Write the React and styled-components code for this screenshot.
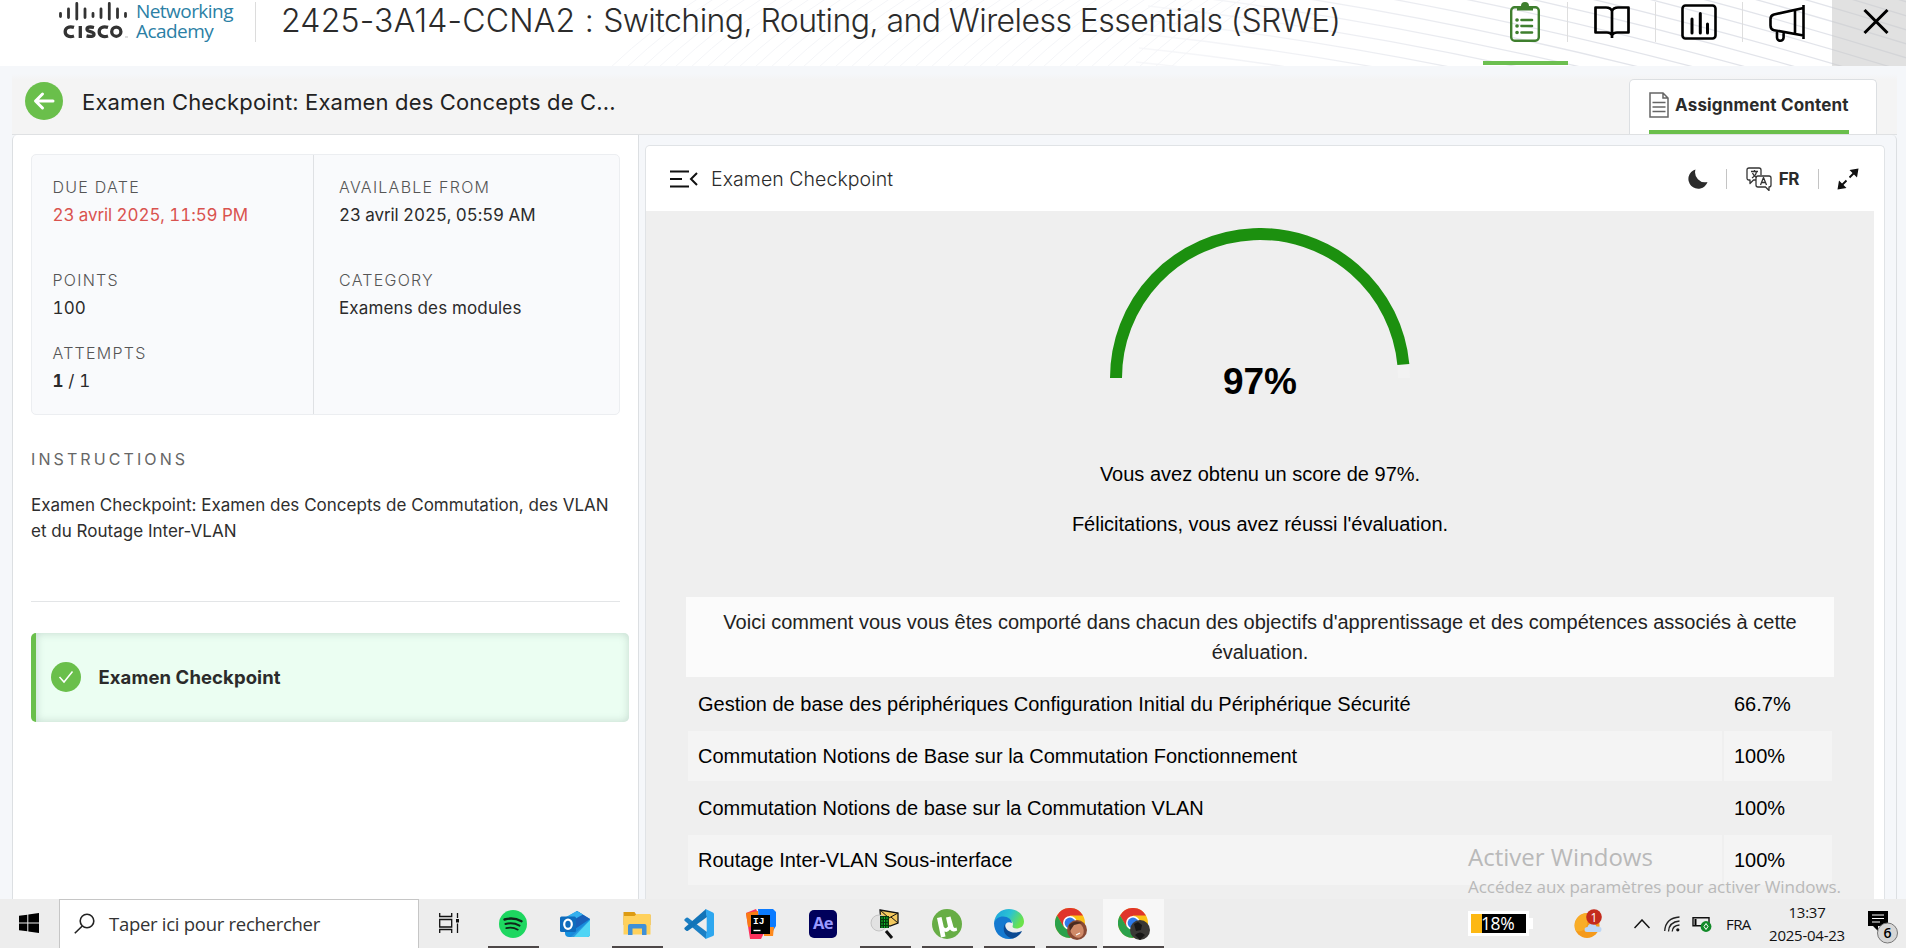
import React from "react";
import styled, { createGlobalStyle, css } from "styled-components";

const GlobalStyle = createGlobalStyle`
  * { box-sizing: border-box; }
  html, body { margin: 0; padding: 0; overflow: hidden; }
  body { font-family: Inter, "Liberation Sans", sans-serif; color: #2b2b2b; background: #f5f7fa; }
  p, h1, h2 { margin: 0; font-weight: 400; }
  svg { display: block; flex: none; }
`;

const Screen = styled.div`
  position: relative;
  width: 1906px;
  height: 948px;
  display: grid;
  grid-template-rows: 66px minmax(0, 1fr) 49px;
  overflow: hidden;
`;

/* ---------- course header ---------- */
const Header = styled.header`
  position: relative;
  display: flex;
  align-items: flex-start;
  background: #fff;
  overflow: hidden;
`;
const Waves = styled.svg`
  position: absolute;
  inset: 0;
`;
const Brand = styled.div`
  position: relative;
  display: flex;
  gap: 7px;
  width: 256px;
  height: 40px;
  margin-top: 2px;
  padding-left: 58px;
  border-right: 1px solid #dcdcdc;
`;
const Academy = styled.div`
  font: 400 19px/20px "Open Sans", sans-serif;
  letter-spacing: -0.55px;
  color: #2b80a5;
  margin-top: -1px;
`;
const CourseTitle = styled.h1`
  position: relative;
  flex: 1;
  padding-left: 25px;
  font-size: 32px;
  font-weight: 300;
  line-height: 42px;
  letter-spacing: -0.55px;
  white-space: nowrap;
`;
const CourseCode = styled.span`
  letter-spacing: 0.22px;
`;
const Nav = styled.nav`
  position: relative;
  display: flex;
`;
const NavItem = styled.div`
  position: relative;
  width: ${(p) => p.$w || 87}px;
  height: 65px;
  padding: 2px ${(p) => p.$pull || 0}px 0 0;
  display: flex;
  justify-content: center;
  border-bottom: 4px solid ${(p) => (p.$active ? "#6cbf50" : "transparent")};
  &::after {
    content: "";
    display: ${(p) => (p.$last ? "none" : "block")};
    position: absolute;
    right: 0;
    top: 2px;
    width: 1px;
    height: 40px;
    background: #dedede;
  }
`;
const CloseButton = styled.div`
  width: 74px;
  height: 66px;
  margin-left: 2px;
  padding: 9px 0 0 31px;
  background: rgba(200, 200, 200, 0.55);
`;

/* ---------- assignment page ---------- */
const Page = styled.main`
  display: grid;
  grid-template-rows: 68px minmax(0, 1fr);
  padding: 0 9px 0 12px;
  background: #f5f7fa;
`;
const SubHeader = styled.div`
  display: flex;
  align-items: flex-end;
  justify-content: space-between;
  background: linear-gradient(#f5f7fa 8px, #f4f4f4 14px);
`;
const BackGroup = styled.div`
  display: flex;
  align-items: center;
  gap: 19px;
  height: 68px;
  padding: 1px 0 0 13px;
`;
const BackButton = styled.div`
  display: grid;
  place-items: center;
  width: 38px;
  height: 38px;
  border-radius: 50%;
  background: #6abf4b;
`;
const PageTitle = styled.h2`
  font-size: 22px;
  line-height: 28px;
  padding-top: 3px;
  letter-spacing: 0.155px;
  color: #222;
`;
const Tab = styled.div`
  width: 248px;
  height: 55px;
  margin-right: 20px;
  padding: 0 27px 0 19px;
  background: #fff;
  border: 1px solid #dcdfe2;
  border-bottom: 0;
  border-radius: 5px 5px 0 0;
`;
const TabLabel = styled.div`
  display: flex;
  align-items: center;
  gap: 6px;
  height: 54px;
  border-bottom: 4px solid #6abf4b;
  font-size: 17px;
  font-weight: 700;
  letter-spacing: 0.18px;
  white-space: nowrap;
`;
const Columns = styled.div`
  display: grid;
  grid-template-columns: 627px minmax(0, 1fr);
  border-top: 1px solid #dfe1e3;
`;
const Sidebar = styled.section`
  padding: 19px 0 0 18px;
  background: #fff;
  border: 1px solid #dcdfe2;
  border-width: 0 1px;
  border-radius: 5px 0 0 0;
`;
const InfoCard = styled.div`
  display: grid;
  grid-template-columns: 282px 1fr;
  width: 589px;
  height: 261px;
  background: #f9fafc;
  border: 1px solid #eceef1;
  border-radius: 5px;
`;
const InfoColumn = styled.div`
  padding: 18px 0 0 ${(p) => (p.$second ? 25 : 20.5)}px;
  border-right: ${(p) => (p.$second ? "0" : "1px solid #dfe1e4")};
`;
const InfoItem = styled.div`
  height: ${(p) => p.$h}px;
`;
const InfoLabel = styled.div`
  font-size: 16px;
  font-weight: 300;
  line-height: 28px;
  letter-spacing: 1.25px;
  color: #555;
`;
const InfoValue = styled.div`
  font-size: 17px;
  line-height: 28px;
  letter-spacing: ${(p) => (p.$date ? -0.09 : 0.14)}px;
  font-variant-numeric: tabular-nums;
  color: ${(p) => (p.$late ? "#d9534f" : "#2b2b2b")};
`;
const SectionTitle = styled.div`
  margin-top: 30px;
  font-size: 16px;
  font-weight: 400;
  line-height: 28px;
  letter-spacing: 3.1px;
  color: #666;
`;
const Description = styled.p`
  width: 589px;
  margin-top: 19px;
  padding-bottom: 57px;
  border-bottom: 1px solid #e3e5e7;
  font-size: 17px;
  line-height: 26px;
  letter-spacing: 0.01px;
  color: #2e2e2e;
`;
const Step = styled.div`
  display: flex;
  align-items: center;
  gap: 17.5px;
  width: 598px;
  height: 89px;
  margin-top: 31px;
  padding: 0 0 1px 15px;
  border-left: 5px solid #6abf4b;
  border-radius: 5px;
  background: #ebfef2;
  box-shadow: inset 0 0 8px rgba(90, 120, 110, 0.28);
  font-size: 18.5px;
  font-weight: 700;
  letter-spacing: 0.09px;
`;
const StepDot = styled.div`
  display: grid;
  place-items: center;
  width: 30px;
  height: 30px;
  border-radius: 50%;
  background: #6abf4b;
`;

const Stage = styled.section`
  padding: 10px 11px 0 6px;
  border-right: 1px solid #dcdfe2;
  border-radius: 0 5px 0 0;
  min-height: 0;
  overflow: hidden;
`;
const Viewer = styled.div`
  height: 100%;
  background: #fff;
  border: 1px solid #e0e3e6;
  border-bottom: 0;
  border-radius: 5px 5px 0 0;
`;
const ViewerBar = styled.div`
  display: flex;
  align-items: center;
  height: 65px;
  padding: 0 25px 0 24px;
`;
const ViewerTitle = styled.div`
  flex: 1;
  padding-left: 13px;
  font-size: 19.5px;
  font-weight: 300;
  letter-spacing: 0.05px;
`;
const Tools = styled.div`
  display: flex;
  align-items: center;
`;
const Rule = styled.i`
  width: 1px;
  height: 20px;
  margin: 0 ${(p) => p.$r || 18}px 0 ${(p) => p.$l || 18}px;
  background: #c4c4c4;
`;
const Lang = styled.b`
  padding-left: 7px;
  font-size: 17px;
  letter-spacing: -0.5px;
`;
const Result = styled.div`
  display: flex;
  flex-direction: column;
  align-items: center;
  height: 700px;
  margin-right: 10px;
  padding-top: 17px;
  background: #efefef;
  font-family: "Liberation Sans", Arial, sans-serif;
  font-size: 20px;
  color: #000;
`;
const Score = styled.div`
  margin-top: -16px;
  font-size: 37px;
  font-weight: 700;
  line-height: 40px;
`;
const Message = styled.p`
  margin-top: ${(p) => p.$top}px;
  line-height: 30px;
`;
const Banner = styled.div`
  width: 1148px;
  margin-top: 58px;
  padding: 10px 28px;
  background: #fbfbfb;
  line-height: 30px;
  color: #222;
  text-align: center;
`;
const Skills = styled.div`
  display: grid;
  grid-template-columns: 1034px 108px;
  gap: 2px;
  padding-top: 2px;
`;
const Cell = styled.div`
  height: 50px;
  padding-left: 10px;
  line-height: 50px;
  background: ${(p) => (p.$odd ? "#f4f4f4" : "transparent")};
`;

/* ---------- desktop overlay and taskbar ---------- */
const Watermark = styled.div`
  position: absolute;
  left: 1468px;
  top: 840px;
  font-family: "Open Sans", sans-serif;
  color: #b9b9b9;
  white-space: nowrap;
`;
const WatermarkTitle = styled.div`
  font-size: 24px;
  line-height: 34px;
  letter-spacing: 0;
`;
const WatermarkText = styled.div`
  font-size: 17px;
  line-height: 26px;
  letter-spacing: -0.05px;
`;
const Taskbar = styled.footer`
  position: relative;
  display: flex;
  background: #ededed;
  font-family: "Open Sans", sans-serif;
  color: #111;
`;
const StartButton = styled.div`
  display: grid;
  place-items: center;
  width: 59px;
  padding: 0 1px 1px 0;
`;
const Search = styled.div`
  display: flex;
  align-items: center;
  gap: 14px;
  width: 360px;
  padding: 0 0 2px 14px;
  background: #fff;
  border: 1px solid #c6c6c6;
  border-bottom: 0;
  font-size: 18.5px;
  letter-spacing: -0.28px;
  color: #333;
`;
const TaskView = styled.div`
  display: grid;
  place-items: center;
  width: 63px;
  padding: 0 3px 1px 0;
`;
const Apps = styled.div`
  display: flex;
`;
const AppButton = styled.div`
  display: grid;
  place-items: center;
  width: 62px;
  grid-template-rows: 47px 2px;
  svg { margin-top: 2px; }
  ${(p) => p.$open && css`
    &::after {
      content: "";
      width: ${p.$front ? 61 : 51}px;
      height: 2px;
      background: #4d4747;
    }
  `}
  ${(p) => p.$front && css`
    width: 61px;
    margin-left: 1px;
    background: #f7f7f7;
  `}
`;
const Tray = styled.div`
  display: flex;
  align-items: center;
  margin-left: auto;
  padding-right: 7px;
`;
const Battery = styled.div`
  position: relative;
  width: 61px;
  height: 25px;
  border: 3px solid #fff;
  background: linear-gradient(90deg, #fdb813 11px, #000 11px);
  color: #fff;
  font-size: 17.5px;
  line-height: 19px;
  padding-left: 10px;
  letter-spacing: -0.4px;
  &::after {
    content: "";
    position: absolute;
    right: -7px;
    top: 4px;
    width: 4px;
    height: 11px;
    background: #fff;
  }
`;
const Weather = styled.div`
  margin: 0 31px 0 45px;
`;
const TrayIcon = styled.div`
  margin-right: ${(p) => p.$r}px;
`;
const Language = styled.div`
  width: 43px;
  font-size: 15px;
  letter-spacing: -0.6px;
`;
const Clock = styled.div`
  width: 76px;
  text-align: center;
  font-size: 15px;
  line-height: 23px;
  letter-spacing: -0.25px;
  white-space: nowrap;
`;

const WaveLines = () => (
  <Waves width="1906" height="66" viewBox="0 0 1906 66" fill="none">
    <defs>
      <linearGradient id="fade" x1="1100" x2="1600" y1="0" y2="0" gradientUnits="userSpaceOnUse">
        <stop offset="0" stopColor="#e2e4ec" stopOpacity="0.2" />
        <stop offset="1" stopColor="#e2e4ea" />
      </linearGradient>
    </defs>
    <g stroke="url(#fade)" strokeWidth="1.3">
      {Array.from({ length: 19 }, (_, i) => {
        const b = -190 + i * 14;
        return <path key={i} d={`M${1190 - i * 3} ${b} Q1500 ${b + 38} 1910 ${b + 165}`} />;
      })}
    </g>
    <g stroke="#f4f5f8" strokeWidth="1">
      {Array.from({ length: 36 }, (_, i) => {
        const x = 640 + i * 16;
        return <path key={i} d={`M${x - 30} 68 Q${x + 12} 28 ${x + 62} -4`} />;
      })}
    </g>
  </Waves>
);

const CiscoLogo = () => (
  <svg width="71" height="40" viewBox="0 0 71 40">
    <g stroke="#333" strokeWidth="2.8" strokeLinecap="round">
      <path d="M2.5 11.5v3M10.5 7v8.500M18.800 1.500v15.500M27 7v8.500M35 11.500v3M43 7v8.500M51.300 1.500v15.500M59.500 7v8.500M67.500 11.500v3" />
    </g>
    <g fill="none" stroke="#333" strokeWidth="3.3">
      <path d="M16 25.400c-5.500-1.800-8.800 1-8.800 4.300s3.300 6.100 8.800 4.300M22.300 24v12M36 25.500c-4.500-1.100-7-.3-7 1.700 0 3.200 7 1.500 7 5 0 2.400-3.500 2.700-7.500 1.700M50 25.400c-5.500-1.800-8.800 1-8.800 4.300s3.300 6.100 8.800 4.300" />
      <circle cx="58.300" cy="29.700" r="4.600" />
    </g>
    <path d="M67 35h3" stroke="#bbb" />
  </svg>
);

const Clipboard = () => (
  <svg width="30" height="40" viewBox="0 0 30 40" fill="none" stroke="#3f7f2e">
    <rect x="1.200" y="5.200" width="27.600" height="33.600" rx="3.500" strokeWidth="2.400" />
    <path d="M7 8V6q0-2 2.500-2h1.500a4 4 0 0 1 8 0h1.500Q23 4 23 6v2.500H7z" fill="#3f7f2e" stroke="none" />
    <path d="M11.500 18H22M11.500 24H22M11.500 30.500H22" strokeWidth="2.600" strokeLinecap="round" />
    <path d="M7 18h.1M7 24h.1M7 30.500h.1" strokeWidth="3.600" strokeLinecap="round" />
  </svg>
);
const Book = () => (
  <svg width="36" height="40" viewBox="0 0 36 40" fill="none" stroke="#000" strokeWidth="2.700" strokeLinejoin="round">
    <path d="M18 9C17 6.500 14.500 5.500 12 5.500H1.500v25H13c2.500 0 4 .8 5 2.500 1-1.700 2.500-2.500 5-2.500h11.500v-25H24c-2.500 0-5 1-6 3.500zM18 9v27" />
  </svg>
);
const Chart = () => (
  <svg width="36" height="40" viewBox="0 0 36 40" fill="none" stroke="#000" strokeWidth="2.600">
    <rect x="1.500" y="3.500" width="33" height="33" rx="3" />
    <path d="M11 17v14M19.300 11.500V31M26.500 22v9" strokeWidth="3" strokeLinecap="round" />
  </svg>
);
const Megaphone = () => (
  <svg width="37" height="42" viewBox="-1 0 37 42" fill="none" stroke="#000" strokeWidth="2.600" strokeLinejoin="round">
    <path d="M34.500 3v34M34.500 6 5 12.500Q1.500 13.500 1.500 17v6.500q0 4 3.500 4.700l29.500 5.300M26 8v24M8 29v6.500a3.300 3.300 0 0 0 6.600 0v-5.300" />
  </svg>
);

const Glyph = ({ children }) => (
  <svg width="30" height="30" viewBox="0 0 30 30">{children}</svg>
);

const Spotify = () => (
  <Glyph>
    <circle cx="15" cy="15" r="14" fill="#1ed760" />
    <g fill="none" stroke="#10251a" strokeLinecap="round">
      <path d="M6.500 10.500q9-2.500 17 1.700" strokeWidth="2.400" />
      <path d="M7.500 15q7.500-2 14 1.600" strokeWidth="2" />
      <path d="M8.300 19.200q6.300-1.500 11.500 1.500" strokeWidth="1.700" />
    </g>
  </Glyph>
);
const Outlook = () => (
  <Glyph>
    <path d="M5 9 17 2l13 8v15q0 3-3 3H9q-4 0-4-4z" fill="#1490df" />
    <path d="M17 2 30 10 12 22 8 12z" fill="#1a5fb8" />
    <path d="M17 2 6 8v7l17-9.500z" fill="#35b0ee" />
    <path d="M30 11v14q0 3-3 3H11z" fill="#50d5f5" />
    <path d="M30 11 14 21 9 28h5z" fill="#1c86d8" opacity=".7" />
    <rect y="7.500" width="16" height="15.500" rx="1.500" fill="#0f6cbd" />
    <ellipse cx="8" cy="15.200" rx="3.800" ry="4.600" fill="none" stroke="#fff" strokeWidth="2.200" />
  </Glyph>
);
const Explorer = () => (
  <Glyph>
    <path d="M1.500 3h11l2 3h14v10h-27z" fill="#dd9b12" />
    <path d="M1.500 7h11l2-2h14v20.500h-27z" fill="#ffd15c" />
    <path d="M6 26V17q0-2 2-2h14.500q2 0 2 2v9H20v-6.500h-9.500V26z" fill="#3f90d8" />
  </Glyph>
);
const VsCode = () => (
  <Glyph>
    <path d="M22 30 .8 12q-1-1 0-2l1.500-1.200q.8-.6 1.700 0L23 23z" fill="#1b7fc4" />
    <path d="M22 0 .8 18.500q-1 1 0 2L2.300 21.700q.8.6 1.700 0L23 8z" fill="#1274b8" />
    <path d="M21.500 0 29 3.500q1 .5 1 1.500v20.500q0 1-1 1.500L21.500 30l1.200-7.500V7.500z" fill="#2ea7ef" />
  </Glyph>
);
const IntelliJ = () => (
  <Glyph>
    <path d="M0 4 10 0 20 20 15 30H4z" fill="#fe315d" />
    <path d="M0 4 12 2v14L2 18z" fill="#f97a12" />
    <path d="M12 0h15l3 3v14l-5 8H14z" fill="#0b7bff" />
    <path d="M18 18h10l-1 9h-9z" fill="#fe8a1d" />
    <rect x="5" y="6" width="19" height="19" fill="#000" />
    <text x="7" y="15" fill="#fff" fontFamily="Liberation Mono, monospace" fontWeight="700" fontSize="9.500">IJ</text>
    <path d="M7.500 21.500h7" stroke="#fff" strokeWidth="1.400" />
  </Glyph>
);
const AfterEffects = () => (
  <Glyph>
    <rect x="1" y="1" width="28" height="28" rx="5" fill="#00005b" />
    <text x="15" y="20" textAnchor="middle" fill="#9999ff" fontFamily="Open Sans, sans-serif" fontWeight="700" fontSize="16.500" letterSpacing="-.5">Ae</text>
  </Glyph>
);
const Sniffer = () => (
  <Glyph>
    <path d="M10 1 28 4v10l-8 3-9-3z" fill="#f3c95f" stroke="#111" strokeWidth="1.300" />
    <path d="m10 1 9 8 9-5M11 14l6-6M28 14l-7-6" fill="none" stroke="#111" />
    <circle cx="9" cy="14" r="8" fill="#e2e2e2" stroke="#c4c4c4" />
    <path d="M10 7h9v12h-9z" fill="#06380d" />
    <path d="M12 8v11M14.500 8v11M17 8v11" stroke="#12c02c" strokeDasharray="2 1" />
    <path d="m16 22 6 7" stroke="#111" strokeWidth="3" />
  </Glyph>
);
const Torrent = () => (
  <Glyph>
    <circle cx="15" cy="15" r="15" fill="#67ad45" />
    <path d="m5 9 4.500-1 2.300 10q1.700 2.500 4.200-.5L14 8.500l4.500-1L21.500 18q1 1.500 3 .5l.7 3q-4.700 2.500-7.200-1-2.500 3.500-5.500 2l1 5-4.500 1z" fill="#fff" />
  </Glyph>
);
const Edge = () => (
  <Glyph>
    <defs>
      <linearGradient id="edge" x1="0" y1="0" x2="1" y2=".4">
        <stop offset="0" stopColor="#1ba0e0" /><stop offset=".55" stopColor="#2bc3d2" /><stop offset="1" stopColor="#6be24b" />
      </linearGradient>
    </defs>
    <path d="M0 14C1 5 7 0 15 0c9 0 15 6 15 12.500 0 5-4 7-7.500 7-5 0-4-2-3.500-4C19 11 14 9 10 9 5 9 1 11 0 14z" fill="url(#edge)" />
    <path d="M0 14c1-4 5-6.500 9-6.500 5 0 9 3 9 6.500-4-2-7 0-7 4 0 6 6 9.500 9 11-1 .5-3 1-5 1C6 30 0 23 0 14z" fill="#1479d0" />
    <path d="M11 15c-3 5-1 13 8 14.500 4-1 7.500-4 9-7.500-8 3.500-17 1-17-7z" fill="#0c4a92" />
  </Glyph>
);
const Chrome = ({ dark }) => (
  <svg width="32" height="32" viewBox="0 0 32 32">
    <circle cx="15" cy="15" r="15" fill="#fbc116" />
    <path d="M2 7.500A15 15 0 0 1 28 7.500H15L8.500 19z" fill="#e0352b" />
    <path d="M2 7.500A15 15 0 0 0 15 30l6.500-11.500H8.500z" fill="#2ba14b" />
    <circle cx="15" cy="15" r="7" fill="#fff" />
    <circle cx="15" cy="15" r="5.400" fill="#2f7bea" />
    <circle cx="22" cy="22" r="10" fill={dark ? "#3a3835" : "#8a4a35"} />
    {dark ? (
      <g fill="#181716"><path d="m16 16 4-2 4 3-1 5-5 1z" /><path d="M17 27q5-5 10 0l-5 5z" /></g>
    ) : (
      <g><ellipse cx="22" cy="22" rx="6.500" ry="8" fill="#d08a68" transform="rotate(-25 22 22)" /><path d="M14 17q6-6 13-2l-8 2-4 6z" fill="#4b2b20" /><path d="m21 27 4-2" stroke="#fff" strokeWidth="1.200" /></g>
    )}
  </svg>
);

const skills = [
  ["Gestion de base des périphériques Configuration Initial du Périphérique Sécurité", "66.7%"],
  ["Commutation Notions de Base sur la Commutation Fonctionnement", "100%"],
  ["Commutation Notions de base sur la Commutation VLAN", "100%"],
  ["Routage Inter-VLAN Sous-interface", "100%"],
];

const Info = ({ label, h, date, late, children }) => (
  <InfoItem $h={h}>
    <InfoLabel>{label}</InfoLabel>
    <InfoValue $date={date} $late={late}>{children}</InfoValue>
  </InfoItem>
);

const gaugePoint = (ratio) => {
  const a = Math.PI * (1 - ratio);
  return `${150 + 144 * Math.cos(a)} ${150 - 144 * Math.sin(a)}`;
};

export default function App() {
  return (
    <Screen>
      <GlobalStyle />
      <Header>
        <WaveLines />
        <Brand>
          <CiscoLogo />
          <Academy>Networking<br />Academy</Academy>
        </Brand>
        <CourseTitle><CourseCode>2425-3A14-CCNA2 : </CourseCode>Switching, Routing, and Wireless Essentials (SRWE)</CourseTitle>
        <Nav>
          <NavItem $active $w={85} $pull={2}><Clipboard /></NavItem>
          <NavItem $w={88}><Book /></NavItem>
          <NavItem $pull={1}><Chart /></NavItem>
          <NavItem $last><Megaphone /></NavItem>
          <CloseButton>
            <svg width="26" height="26" viewBox="0 0 26 26" stroke="#000" strokeWidth="3"><path d="m1.500 1 23 23M24.500 1l-23 23" /></svg>
          </CloseButton>
        </Nav>
      </Header>

      <Page>
        <SubHeader>
          <BackGroup>
            <BackButton>
              <svg width="22" height="20" viewBox="0 0 22 20" fill="none" stroke="#fff" strokeWidth="3" strokeLinecap="round" strokeLinejoin="round"><path d="M20 10H3M9.500 3 2.500 10l7 7" /></svg>
            </BackButton>
            <PageTitle>Examen Checkpoint: Examen des Concepts de C...</PageTitle>
          </BackGroup>
          <Tab>
            <TabLabel>
              <svg width="20" height="26" viewBox="0 0 20 26" fill="none" stroke="#666" strokeWidth="1.500">
                <path d="M1 1h13l5 5v19H1zM14 1v5h5" /><path d="M3.500 10.500h13M3.500 15h13M3.500 19.500h13" />
              </svg>
              Assignment Content
            </TabLabel>
          </Tab>
        </SubHeader>

        <Columns>
          <Sidebar>
            <InfoCard>
              <InfoColumn>
                <Info label="DUE DATE" h={93} date late>23 avril 2025, 11:59 PM</Info>
                <Info label="POINTS" h={73}>100</Info>
                <Info label="ATTEMPTS" h={56}><b>1</b> / 1</Info>
              </InfoColumn>
              <InfoColumn $second>
                <Info label="AVAILABLE FROM" h={93} date>23 avril 2025, 05:59 AM</Info>
                <Info label="CATEGORY" h={73}>Examens des modules</Info>
              </InfoColumn>
            </InfoCard>
            <SectionTitle>INSTRUCTIONS</SectionTitle>
            <Description>
              Examen Checkpoint: Examen des Concepts de Commutation, des VLAN et du Routage Inter-VLAN
            </Description>
            <Step>
              <StepDot>
                <svg width="16" height="14" viewBox="0 0 16 14" fill="none" stroke="#fff" strokeWidth="1.500"><path d="m1.500 7 4.500 5 8.500-10.500" /></svg>
              </StepDot>
              Examen Checkpoint
            </Step>
          </Sidebar>

          <Stage>
            <Viewer>
              <ViewerBar>
                <svg width="28" height="18" viewBox="0 0 28 18" fill="none" stroke="#111" strokeWidth="2"><path d="M0 1.500h19M0 9h12M0 16.500h19M27 3l-6 6 6 6" /></svg>
                <ViewerTitle>Examen Checkpoint</ViewerTitle>
                <Tools>
                  <svg width="20" height="20" viewBox="0 0 20 20"><path d="M7.500.5a9.800 9.800 0 1 0 12 12.500A10 10 0 0 1 7.500.5z" fill="#2b2b2b" /></svg>
                  <Rule $r={19} />
                  <svg width="26" height="24" viewBox="0 0 26 24" fill="none" stroke="#333" strokeWidth="1.300" strokeLinejoin="round">
                    <path d="M10 13H7.500L4 16.500V13H3q-2 0-2-2V3q0-2 2-2h10q2 0 2 2v5M12 9h11q2 0 2 2v7q0 2-2 2v3.500L19.500 20H12q-2 0-2-2v-7q0-2 2-2z" />
                    <path d="M5 4.500h7M8.500 3v1.500M6 11q4-2.500 4.500-6.500M6.500 6q1.500 3.500 4 4.500M14.500 18l3-7.500 3 7.500M15.500 15.500h4" />
                  </svg>
                  <Lang>FR</Lang>
                  <Rule $l={19} />
                  <svg width="22" height="22" viewBox="0 0 22 22" fill="#111" stroke="#111"><path d="m12.500 2 9-1.500-1.500 9zM2 12.500l7.500 7.500-9 1.500z" stroke="none" /><path d="m18 4-5.500 5.500M9.500 12.500 4 18" strokeWidth="1.900" /></svg>
                </Tools>
              </ViewerBar>
              <Result>
                <svg width="300" height="150" viewBox="0 0 300 150" fill="none" strokeWidth="12">
                  <path d="M6 150A144 144 0 0 1 294 150" stroke="#f2f2f2" />
                  <path d={`M6 150A144 144 0 0 1 ${gaugePoint(0.97)}`} stroke="#1c900f" />
                </svg>
                <Score>97%</Score>
                <Message $top={57}>Vous avez obtenu un score de 97%.</Message>
                <Message $top={20}>Félicitations, vous avez réussi l'évaluation.</Message>
                <Banner>
                  Voici comment vous vous êtes comporté dans chacun des objectifs d'apprentissage et des compétences associés à cette évaluation.
                </Banner>
                <Skills>
                  {skills.map(([name, score], i) => (
                    <React.Fragment key={name}>
                      <Cell $odd={i % 2 === 1}>{name}</Cell>
                      <Cell $odd={i % 2 === 1}>{score}</Cell>
                    </React.Fragment>
                  ))}
                </Skills>
              </Result>
            </Viewer>
          </Stage>
        </Columns>
      </Page>

      <Taskbar>
        <StartButton>
          <svg width="20" height="20" viewBox="0 0 20 20"><path d="M0 2.800 8.300 1.700v7.800H0zM9.300 1.500 20 0v9.500H9.300zM0 10.500h8.300v7.800L0 17.200zM9.300 10.500H20V20L9.300 18.500z" /></svg>
        </StartButton>
        <Search>
          <svg width="21" height="21" viewBox="0 0 21 21" fill="none" stroke="#222" strokeWidth="1.600"><circle cx="13" cy="8" r="6.800" /><path d="M8.300 13 .8 20.300" /></svg>
          Taper ici pour rechercher
        </Search>
        <TaskView>
          <svg width="20" height="20" viewBox="0 0 20 20" fill="none" stroke="#111" strokeWidth="1.300"><path d="M.7 0v3.500h12V0M.7 20v-3.500h12V20M.7 6.500h12v7.500H.7zM18.500 0v5M18.500 10.500V20" /><path d="M17 6h3v3.500h-3z" fill="#111" stroke="none" /></svg>
        </TaskView>
        <Apps>
          <AppButton $open><Spotify /></AppButton>
          <AppButton><Outlook /></AppButton>
          <AppButton $open><Explorer /></AppButton>
          <AppButton><VsCode /></AppButton>
          <AppButton><IntelliJ /></AppButton>
          <AppButton><AfterEffects /></AppButton>
          <AppButton $open><Sniffer /></AppButton>
          <AppButton $open><Torrent /></AppButton>
          <AppButton $open><Edge /></AppButton>
          <AppButton $open><Chrome /></AppButton>
          <AppButton $open $front><Chrome dark /></AppButton>
        </Apps>
        <Tray>
          <Battery>18%</Battery>
          <Weather>
            <svg width="29" height="30" viewBox="0 0 29 30">
              <circle cx="13" cy="16.500" r="12.500" fill="#f59a1b" />
              <path d="M13 4A12.500 12.500 0 0 0 2 22q8 2 11-6z" fill="#fbb52c" opacity=".7" />
              <path d="M13 23q-2.500 0-2.500-2.500t3-2.500q1-3.500 4.500-3.500t4.500 3q5-.5 5 2.700T24 23z" fill="#bcd7f6" />
              <circle cx="20" cy="8" r="7.800" fill="#c42b1c" />
              <text x="20" y="12.500" fill="#fff" fontSize="12" textAnchor="middle" fontFamily="Open Sans, sans-serif">1</text>
            </svg>
          </Weather>
          <TrayIcon $r={14}><svg width="16" height="10" viewBox="0 0 16 10" fill="none" stroke="#111" strokeWidth="1.500"><path d="m.5 9 7.500-8 7.500 8" /></svg></TrayIcon>
          <TrayIcon $r={12}>
            <svg width="16" height="16" viewBox="0 0 16 16" fill="none" stroke="#222" strokeWidth="1.300"><path d="M.7 15Q1.500 2 15.500 1M4.500 15.500q.5-9.500 11-10.500M8.200 15.500Q8.500 9.500 15.500 9" /><circle cx="13.800" cy="13.800" r="1.600" fill="#111" stroke="none" /></svg>
          </TrayIcon>
          <TrayIcon $r={14}>
            <svg width="20" height="16" viewBox="0 0 20 16"><path d="M1 1.700h16v8H1z" fill="none" stroke="#111" strokeWidth="1.400" /><path d="M2.500 3h2v6h-2z" /><circle cx="14" cy="10.500" r="5.400" fill="#128a28" /><path d="M14 7.500 16 10.500 14 13.500 12 10.500z" fill="none" stroke="#fff" /></svg>
          </TrayIcon>
          <Language>FRA</Language>
          <Clock>13:37<br />2025-04-23</Clock>
          <svg width="54" height="40" viewBox="0 0 54 40">
            <path d="M23 7h20v15H33v5l-5-5h-5z" fill="#000" />
            <path d="M27 11h12M27 14.500h12M27 18h8" stroke="#fff" />
            <circle cx="42.500" cy="29" r="10" fill="#d6d6d6" stroke="#777" />
            <text x="42.500" y="34" textAnchor="middle" fontSize="14" fontWeight="600" fontFamily="Open Sans, sans-serif">6</text>
          </svg>
        </Tray>
      </Taskbar>

      <Watermark>
        <WatermarkTitle>Activer Windows</WatermarkTitle>
        <WatermarkText>Accédez aux paramètres pour activer Windows.</WatermarkText>
      </Watermark>
    </Screen>
  );
}
